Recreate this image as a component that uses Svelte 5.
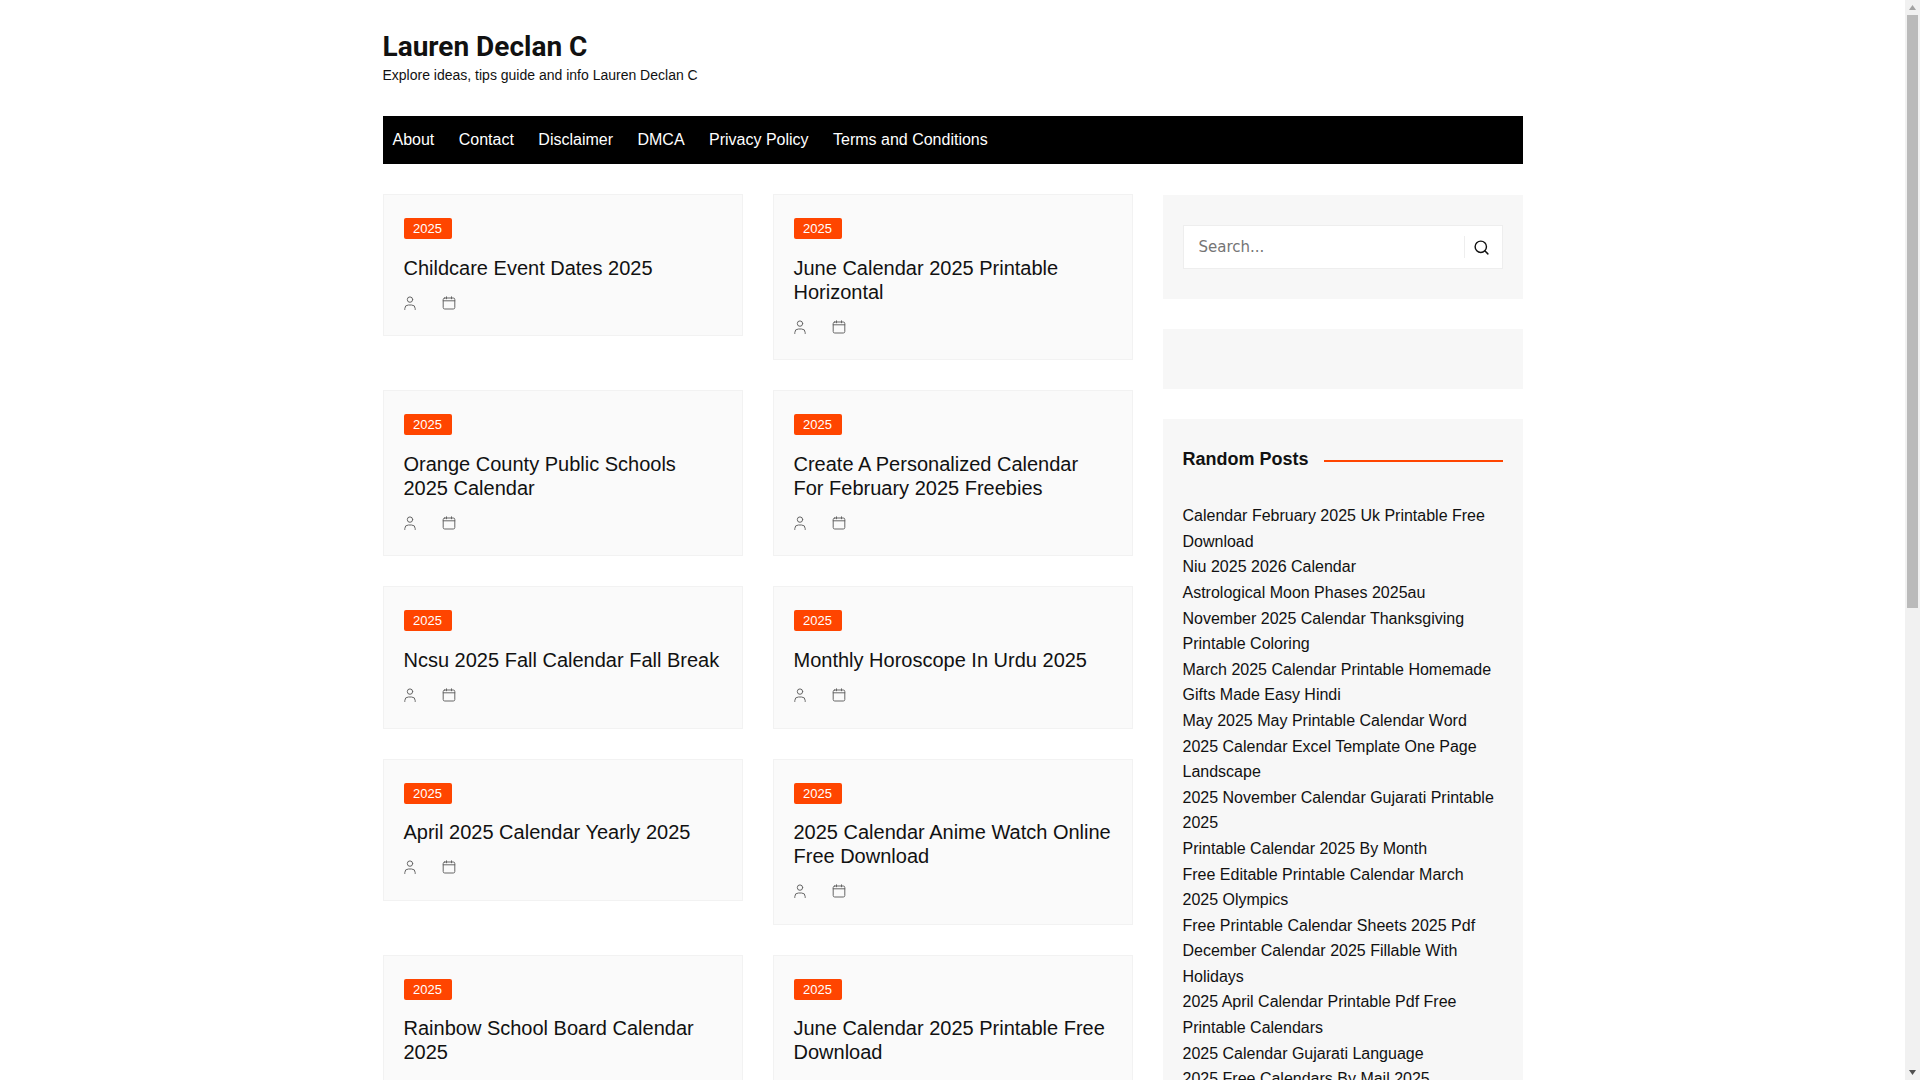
<script>
  const cards = [
    'Childcare Event Dates 2025',
    'June Calendar 2025 Printable Horizontal',
    'Orange County Public Schools 2025 Calendar',
    'Create A Personalized Calendar For February 2025 Freebies',
    'Ncsu 2025 Fall Calendar Fall Break',
    'Monthly Horoscope In Urdu 2025',
    'April 2025 Calendar Yearly 2025',
    '2025 Calendar Anime Watch Online Free Download',
    'Rainbow School Board Calendar 2025',
    'June Calendar 2025 Printable Free Download'
  ];
  const nav = ['About', 'Contact', 'Disclaimer', 'DMCA', 'Privacy Policy', 'Terms and Conditions'];
  const posts = [
    'Calendar February 2025 Uk Printable Free Download',
    'Niu 2025 2026 Calendar',
    'Astrological Moon Phases 2025au',
    'November 2025 Calendar Thanksgiving Printable Coloring',
    'March 2025 Calendar Printable Homemade Gifts Made Easy Hindi',
    'May 2025 May Printable Calendar Word',
    '2025 Calendar Excel Template One Page Landscape',
    '2025 November Calendar Gujarati Printable 2025',
    'Printable Calendar 2025 By Month',
    'Free Editable Printable Calendar March 2025 Olympics',
    'Free Printable Calendar Sheets 2025 Pdf',
    'December Calendar 2025 Fillable With Holidays',
    '2025 April Calendar Printable Pdf Free Printable Calendars',
    '2025 Calendar Gujarati Language',
    '2025 Free Calendars By Mail 2025'
  ];
</script>

<div class="page">
  <div class="scroller">
    <div class="container">
      <header class="brand">
        <h1>Lauren Declan C</h1>
        <p>Explore ideas, tips guide and info Lauren Declan C</p>
      </header>
      <nav>
        {#each nav as item}<a href="#top">{item}</a>{/each}
      </nav>
      <div class="layout">
        <main class="grid">
          {#each cards as title}
            <article>
              <span class="badge">2025</span>
              <h2>{title}</h2>
              <div class="meta">
                <svg width="14" height="14" viewBox="0 0 14 14" fill="none" stroke="#666" stroke-width="1" stroke-linecap="round"><circle cx="7" cy="3.6" r="2.7"/><path d="M1.8 13.5v-.9a3.6 3.6 0 0 1 3.6-3.6h3.2a3.6 3.6 0 0 1 3.6 3.6v.9"/></svg>
                <svg width="14" height="14" viewBox="0 0 14 14" fill="none" stroke="#666" stroke-width="1" stroke-linecap="round"><rect x="1.2" y="2" width="11.6" height="11" rx="1.5"/><path d="M4.5.8v2M9.5.8v2M1.2 4.8h11.6"/></svg>
              </div>
            </article>
          {/each}
        </main>
        <aside>
          <section class="search">
            <div class="box">
              <input type="text" placeholder="Search..." />
              <button aria-label="Search">
                <svg width="17" height="17" viewBox="0 0 24 24" fill="none" stroke="#111" stroke-width="2" stroke-linecap="round"><circle cx="11" cy="11" r="8"/><path d="m21 21-4.3-4.3"/></svg>
              </button>
            </div>
          </section>
          <section class="empty"></section>
          <section class="random">
            <div class="head"><h3>Random Posts</h3><span></span></div>
            <ul>
              {#each posts as p}<li><a href="#top">{p}</a></li>{/each}
            </ul>
          </section>
        </aside>
      </div>
    </div>
  </div>
  <div class="scrollbar" aria-hidden="true">
    <svg width="15" height="15" viewBox="0 0 15 15"><polygon points="7.5,5 11,10 4,10" fill="#a3a3a3"/></svg>
    <div class="thumb"></div>
    <div class="rest"></div>
    <svg width="15" height="15" viewBox="0 0 15 15"><polygon points="4,5 11,5 7.5,10" fill="#505050"/></svg>
  </div>
</div>

<style>
  :global(body) { margin: 0; background: #fff; color: #111; font-family: "Liberation Sans", Arial, sans-serif; }
  .page { display: flex; height: 100vh; overflow: hidden; }
  .scroller { flex: 1; min-width: 0; overflow: hidden; }
  .scrollbar { width: 15px; flex: none; background: #f1f1f1; display: flex; flex-direction: column; align-items: center; }
  .thumb { width: 11px; height: 593px; flex: none; background: #bababa; }
  .rest { flex: 1; }
  .container { width: 1140px; margin: 0 auto; }
  .brand { padding: 31px 0 31px; }
  h1 { margin: 0; font-family: Roboto, sans-serif; font-size: 28px; line-height: 32px; font-weight: 700; color: #111; }
  .brand p { margin: 2px 0 0; font-size: 14px; line-height: 20px; }
  nav { display: flex; background: #000; height: 48px; align-items: center; padding-left: 10px; gap: 24.45px; }
  nav a { color: #fff; text-decoration: none; font-size: 16px; }
  .layout { display: flex; gap: 30px; margin-top: 30px; align-items: flex-start; }
  .grid { width: 750px; flex: none; display: grid; grid-template-columns: 360px 360px; gap: 30px; align-items: start; }
  article { background: #fafafa; border: 1px solid #f2f2f2; padding: 23px 20px 25.5px; }
  .badge { display: block; width: 48px; height: 21px; line-height: 21px; text-align: center; background: #ff4500; color: #fff; font-size: 13px; border-radius: 2px; }
  h2 { margin: 16.5px 0 0; font-size: 20px; line-height: 24px; font-weight: 400; color: #111; }
  .meta { display: flex; gap: 25px; margin: 16.2px 0 0 -1px; height: 14px; }
  aside { width: 360px; flex: none; display: flex; flex-direction: column; gap: 30px; margin-top: 1px; }
  aside section { background: #f7f7f7; }
  .search { padding: 30px 20px; }
  .box { display: flex; height: 44px; box-sizing: border-box; border: 1px solid #eee; background: #fff; align-items: center; }
  input { flex: 1; min-width: 0; border: 0; outline: 0; background: transparent; padding: 0 15px; font-size: 15px; font-family: "DejaVu Sans", sans-serif; }
  input::placeholder { color: #757575; }
  button { width: 38px; flex: none; height: 22px; box-sizing: border-box; border: 0; border-left: 1px solid #eee; background: transparent; padding: 0 3px 0 0; display: flex; align-items: center; justify-content: center; }
  .empty { height: 60px; }
  .random { padding: 29px 20px 30px; }
  .head { display: flex; align-items: center; gap: 15px; }
  h3 { margin: 0; font-size: 18px; line-height: 22px; font-weight: 700; }
  .head span { flex: 1; height: 2px; background: #ff4500; margin-top: 4px; }
  ul { list-style: none; margin: 33.2px 0 0; padding: 0; }
  li { font-size: 16px; line-height: 25.6px; }
  li a { color: #111; text-decoration: none; }
</style>
